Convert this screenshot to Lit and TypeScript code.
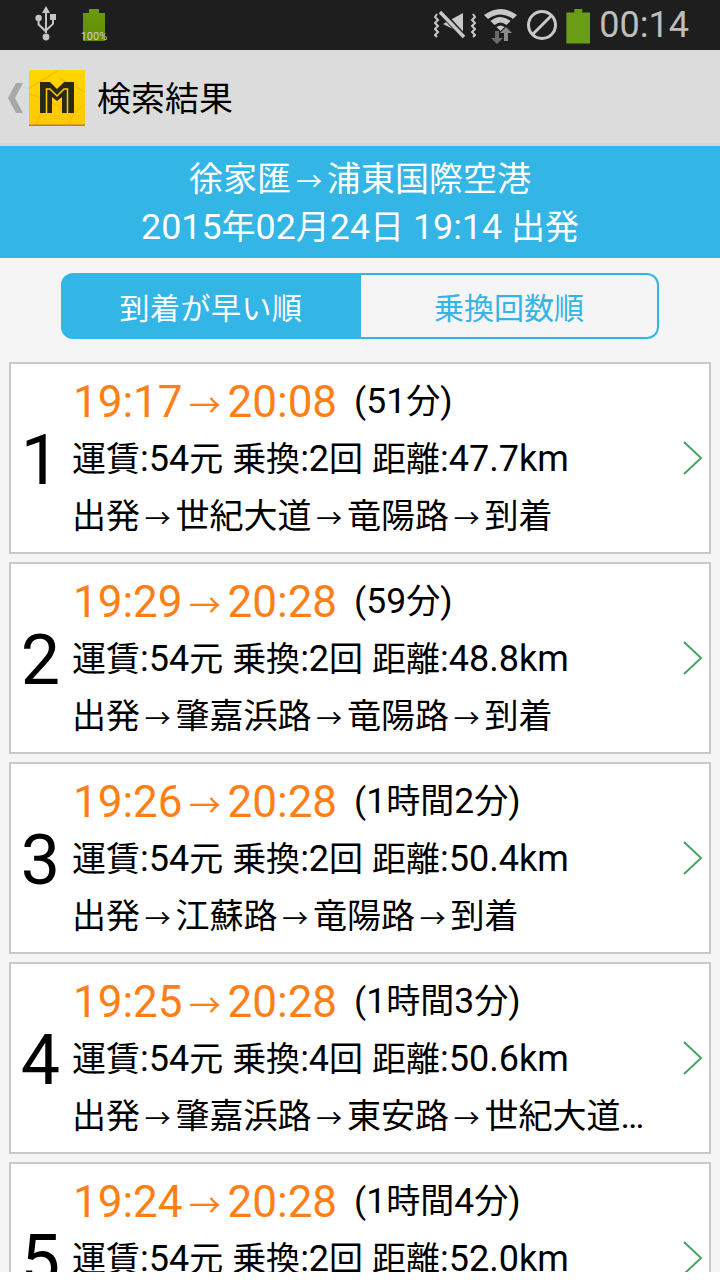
import { LitElement, html, css, svg } from 'lit'
import { customElement } from 'lit/decorators.js'

interface Route {
	dep: string
	arr: string
	took: string
	transfers: number
	km: string
	stops: string[]
}

const routes: Route[] = [
	{ dep: '19:17', arr: '20:08', took: '51分', transfers: 2, km: '47.7', stops: ['出発', '世紀大道', '竜陽路', '到着'] },
	{ dep: '19:29', arr: '20:28', took: '59分', transfers: 2, km: '48.8', stops: ['出発', '肇嘉浜路', '竜陽路', '到着'] },
	{ dep: '19:26', arr: '20:28', took: '1時間2分', transfers: 2, km: '50.4', stops: ['出発', '江蘇路', '竜陽路', '到着'] },
	{ dep: '19:25', arr: '20:28', took: '1時間3分', transfers: 4, km: '50.6', stops: ['出発', '肇嘉浜路', '東安路', '世紀大道', '竜陽路', '到着'] },
	{ dep: '19:24', arr: '20:28', took: '1時間4分', transfers: 2, km: '52.0', stops: ['出発', '世紀大道', '竜陽路', '到着'] },
]

// kanji run a touch smaller than the latin around them, arrows get their own narrow box
const mixed = (text: string) =>
	text.split(/(→|[\u3040-\u9fff]+)/).map((part) => {
		if (part === '→') return html`<span class="arrow">→</span>`
		if (/^[\u3040-\u9fff]/.test(part)) return html`<span class="cjk">${part}</span>`
		return part
	})

const usbIcon = svg`<svg width="22" height="36" viewBox="0 0 22 36" fill="#c4c4c4">
	<path d="M11 0l4 7h-3v20h-2V7H7z" />
	<circle cx="11" cy="31" r="3.4" />
	<circle cx="3.6" cy="12" r="3.2" />
	<rect x="15" y="8" width="6" height="6" />
	<path d="M2.6 13h2v5l5.4 5v3l-7.4-7zM17 13h2v5l-8 8v-3l6-5.600z" />
</svg>`

const muteIcon = svg`<svg width="42" height="30" viewBox="0 0 42 30" fill="none">
	<path d="M9 14L29 3v21z" fill="#c8c8c8" />
	<path d="M6 1l25 27" stroke="#1e1e1e" stroke-width="6" />
	<path d="M6 2l24 25" stroke="#c8c8c8" stroke-width="3.500" />
	<path d="M3 4l-2 3 3 3-3 3 3 3-3 3 3 3-3 3 2 2M39 4l2 3-3 3 3 3-3 3 3 3-3 3 3 3-2 2" stroke="#c8c8c8" stroke-width="2" />
</svg>`

const wifiIcon = svg`<svg width="36" height="38" viewBox="0 0 36 38">
	<path d="M1 8Q17.500-4 34 8l-4 4Q17.500 3 5 12z" fill="#c8c8c8" />
	<path d="M7.500 14q10-8 20 0l-4 4q-6-5-12 0z" fill="#c8c8c8" />
	<path d="M13.500 20q4-3 8 0l-4 4z" fill="#c8c8c8" />
	<path d="M12 24h4v7h4l-6 6-6-6h4z" fill="#6c6c6c" />
	<path d="M23 20l6 6h-4v8h-4v-8h-4z" fill="#8a8a8a" />
</svg>`

const blockedIcon = svg`<svg width="30" height="30" viewBox="0 0 30 30" fill="none" stroke="#c8c8c8" stroke-width="3">
	<circle cx="15" cy="15" r="13.500" />
	<path d="M5.500 24.500l19-19" />
</svg>`

const logo = svg`<svg width="56" height="56" viewBox="0 0 56 56">
	<defs>
		<linearGradient id="tile" x1="0" y1="0" x2="0" y2="1">
			<stop offset="0" stop-color="#ffd800" />
			<stop offset="1" stop-color="#ffc600" />
		</linearGradient>
	</defs>
	<rect width="56" height="56" fill="url(#tile)" />
	<path d="M0 18L30 0M6 56L18 30L0 24M18 30L44 44L40 56M44 44L56 34M30 8L56 22" stroke="#f8bc00" stroke-width="1.500" fill="none" />
	<rect y="54.500" width="56" height="1.500" fill="#a98a1c" />
	<path d="M11 12h10l7 7 7-7h10v31H33V27l-5 4-5-4v16H11z" fill="#2b2818" />
	<path d="M17.500 43V19h3.500l7 7 7-7h3.500v24" stroke="#ffd000" stroke-width="1.500" fill="none" />
</svg>`

@customElement('app-root')
export class AppRoot extends LitElement {
	static styles = css`
		:host {
			display: block;
			height: 1272px;
			overflow: hidden;
			background: #f5f5f5;
			font-family: Roboto, "Noto Sans CJK JP", sans-serif;
			color: #000;
		}

		.cjk {
			font-size: 34px;
		}

		.arrow {
			display: inline-block;
			width: 1.37em;
			font-size: 0.73em;
			text-align: center;
			font-family: "Noto Sans CJK JP", sans-serif;
		}

		.status {
			display: flex;
			align-items: center;
			height: 50px;
			background: #1e1e1e;
			padding: 0 31px 0 35px;
		}

		.usb {
			display: flex;
			margin-top: -3px;
		}

		.charge {
			position: relative;
			width: 22px;
			height: 32px;
			margin-left: 26px;
		}

		.charge-fill {
			height: 100%;
			background: linear-gradient(#6b9c0a, #5f8a08);
			clip-path: polygon(6px 0, 16px 0, 16px 4px, 22px 4px, 22px 32px, 0 32px, 0 4px, 6px 4px);
		}

		.charge-label {
			position: absolute;
			left: -3px;
			top: 22px;
			width: 28px;
			font-size: 11px;
			line-height: 11px;
			color: #cfcfcf;
			text-align: center;
		}

		.status-right {
			display: flex;
			align-items: center;
			margin-left: auto;
		}

		.status-right svg {
			display: block;
		}

		.mute {
			margin-right: 7px;
		}

		.wifi {
			margin-right: 8px;
			margin-top: 2px;
		}

		.blocked {
			margin-right: 9px;
		}

		.batt {
			width: 24px;
			height: 35px;
			margin: 2px 9px 0 0;
			background: #6b9c16;
			clip-path: polygon(8px 0, 16px 0, 16px 4px, 24px 4px, 24px 35px, 0 35px, 0 4px, 8px 4px);
		}

		.clock {
			font-size: 36px;
			line-height: 50px;
			color: #bdbdbd;
		}

		.bar {
			display: flex;
			align-items: center;
			box-sizing: border-box;
			height: 96px;
			padding: 3px 0 0 8px;
			background: #dcdcdc;
			border-bottom: 3px solid #d6d6d6;
		}

		.back {
			display: block;
			margin-right: 6px;
		}

		.app-logo {
			display: block;
			margin-right: 12px;
		}

		.app-logo svg {
			display: block;
		}

		.bar h1 {
			margin: 2px 0 0;
			font-size: 34px;
			font-weight: 400;
			line-height: 1;
		}

		.route {
			background: #33b5e5;
			color: #fff;
			text-align: center;
			font-size: 35.800px;
			padding: 9px 0 7px;
		}

		.route div {
			height: 48px;
			line-height: 48px;
		}

		.tabs {
			display: flex;
			margin: 15px 61px 23px;
			height: 66px;
		}

		.tab {
			flex: 1;
			display: flex;
			align-items: center;
			justify-content: center;
			box-sizing: border-box;
			border: 2px solid #33b5e5;
			border-left: 0;
			border-radius: 0 12px 12px 0;
			font-size: 30px;
			color: #33b5e5;
		}

		.tab.on {
			padding-left: 2px;
			background: #33b5e5;
			color: #fff;
			border-radius: 12px 0 0 12px;
			letter-spacing: 0.5px;
		}

		.list {
			display: flex;
			flex-direction: column;
			gap: 8px;
			padding: 0 9px;
		}

		.card {
			flex: none;
			display: flex;
			align-items: center;
			box-sizing: border-box;
			height: 192px;
			border: 2px solid #c8c8c8;
			background: #fff;
		}

		.num {
			flex: none;
			width: 59px;
			font-size: 70px;
			line-height: 1;
			text-align: center;
			margin: 3px 2px 0 0;
		}

		.body {
			flex: 1;
			min-width: 0;
			font-size: 35.500px;
			white-space: nowrap;
		}

		.row {
			height: 57px;
			line-height: 57px;
		}

		.times {
			display: flex;
			align-items: flex-start;
			height: 58px;
		}

		.clock-range {
			font-size: 44px;
			line-height: 59px;
			color: #ff7f17;
			margin-right: 17px;
			padding-left: 1px;
		}

		.clock-range .arrow {
			width: 1.4em;
		}

		.fare {
			font-size: 36px;
		}

		.stops {
			height: 56px;
			width: 573px;
			overflow: hidden;
			text-overflow: ellipsis;
		}

		.chevron {
			flex: none;
			display: block;
			margin: 0 6px 0 10px;
		}
	`

	renderCard(r: Route, i: number) {
		return html`<div class="card">
			<div class="num">${i + 1}</div>
			<div class="body">
				<div class="row times">
					<span class="clock-range">${mixed(`${r.dep}→${r.arr}`)}</span>
					<span>${mixed(`(${r.took})`)}</span>
				</div>
				<div class="row fare">${mixed(`運賃:54元 乗換:${r.transfers}回 距離:${r.km}km`)}</div>
				<div class="row stops">${mixed(r.stops.join('→'))}</div>
			</div>
			<svg class="chevron" width="20" height="34" viewBox="0 0 20 34" fill="none" stroke="#46a560" stroke-width="2">
				<path d="M1 1l17 16L1 33" />
			</svg>
		</div>`
	}

	render() {
		return html`
			<div class="status">
				<span class="usb">${usbIcon}</span>
				<div class="charge">
					<div class="charge-fill"></div>
					<div class="charge-label">100%</div>
				</div>
				<div class="status-right">
					<span class="mute">${muteIcon}</span>
					<span class="wifi">${wifiIcon}</span>
					<span class="blocked">${blockedIcon}</span>
					<div class="batt"></div>
					<span class="clock">00:14</span>
				</div>
			</div>
			<div class="bar">
				<svg class="back" width="15" height="30" viewBox="0 0 15 30" fill="#a8a8a8">
					<path d="M8 0h7L7 15l8 15H8L0 15z" />
				</svg>
				<span class="app-logo">${logo}</span>
				<h1>検索結果</h1>
			</div>
			<div class="route">
				<div>${mixed('徐家匯→浦東国際空港')}</div>
				<div>${mixed('2015年02月24日 19:14 出発')}</div>
			</div>
			<div class="tabs">
				<div class="tab on">到着が早い順</div>
				<div class="tab">乗換回数順</div>
			</div>
			<div class="list">${routes.map((r, i) => this.renderCard(r, i))}</div>
		`
	}
}
